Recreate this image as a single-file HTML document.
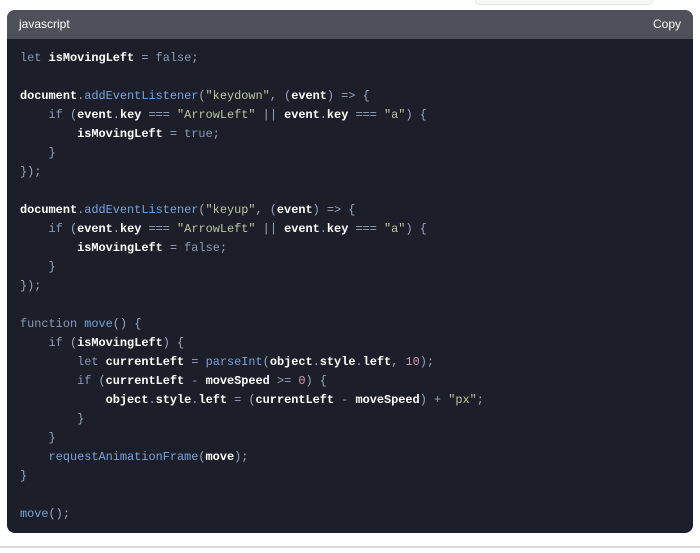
<!DOCTYPE html>
<html><head><style>
body{margin:0;background:#fff;width:700px;height:553px;position:relative;overflow:hidden;font-family:"Liberation Sans",sans-serif}
.top{position:absolute;left:475px;top:-6px;width:176px;height:9px;border:1px solid #e4e4e4;border-radius:5px;background:#f7f7f7}
.box{position:absolute;left:7px;top:10px;width:686px;height:523px;background:#1c1f29;border-radius:8px;overflow:hidden}
.hd{height:29px;background:#50505a;color:#fff;font-size:12px;line-height:28px;padding:0 12px;display:flex;justify-content:space-between}
pre{margin:0;padding:10px 0 0 13px;font-family:"Liberation Mono",monospace;font-size:11.9px;line-height:19px;color:#9aa6bd}
b{color:#fff;font-weight:bold}
.f{color:#76a4dc}.s{color:#b8c7a0}.k{color:#8a9bb8}.n{color:#d39aaf}
.line{position:absolute;left:0;top:546px;width:700px;height:2px;background:#d8d8d8}
</style></head><body>
<div class="top"></div>
<div class="box"><div class="hd"><span>javascript</span><span>Copy</span></div>
<pre><span class="k">let</span> <b>isMovingLeft</b> = <span class="k">false</span>;

<b>document</b>.<span class="f">addEventListener</span>(<span class="s">"keydown"</span>, (<b>event</b>) =&gt; {
    <span class="k">if</span> (<b>event</b>.<b>key</b> === <span class="s">"ArrowLeft"</span> || <b>event</b>.<b>key</b> === <span class="s">"a"</span>) {
        <b>isMovingLeft</b> = <span class="k">true</span>;
    }
});

<b>document</b>.<span class="f">addEventListener</span>(<span class="s">"keyup"</span>, (<b>event</b>) =&gt; {
    <span class="k">if</span> (<b>event</b>.<b>key</b> === <span class="s">"ArrowLeft"</span> || <b>event</b>.<b>key</b> === <span class="s">"a"</span>) {
        <b>isMovingLeft</b> = <span class="k">false</span>;
    }
});

<span class="k">function</span> <span class="f">move</span>() {
    <span class="k">if</span> (<b>isMovingLeft</b>) {
        <span class="k">let</span> <b>currentLeft</b> = <span class="f">parseInt</span>(<b>object</b>.<b>style</b>.<b>left</b>, <span class="n">10</span>);
        <span class="k">if</span> (<b>currentLeft</b> - <b>moveSpeed</b> &gt;= <span class="n">0</span>) {
            <b>object</b>.<b>style</b>.<b>left</b> = (<b>currentLeft</b> - <b>moveSpeed</b>) + <span class="s">"px"</span>;
        }
    }
    <span class="f">requestAnimationFrame</span>(<b>move</b>);
}

<span class="f">move</span>();</pre></div>
<div class="line"></div>
</body></html>
